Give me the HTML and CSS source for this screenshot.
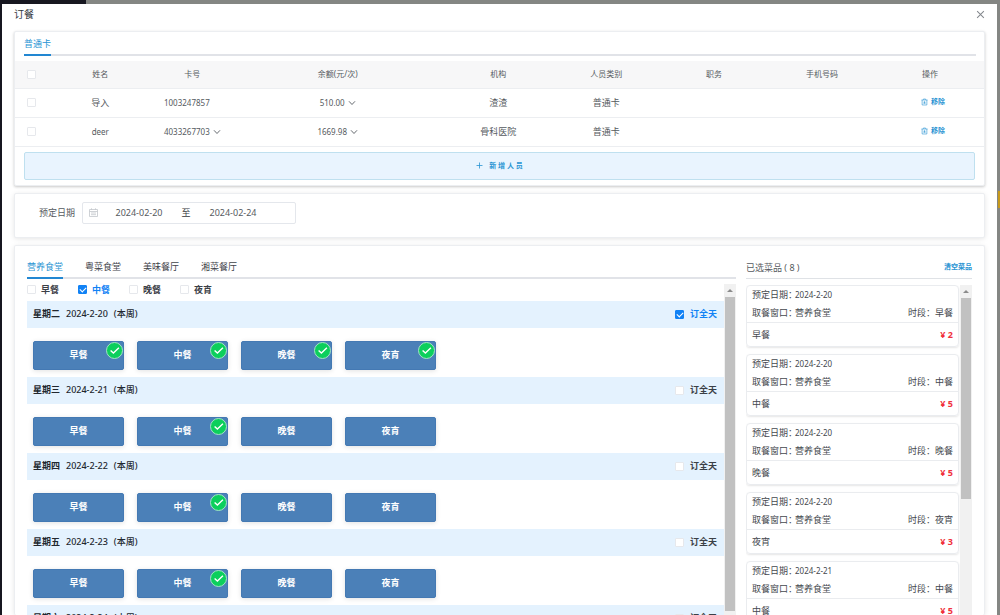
FILE: index.html
```html
<!DOCTYPE html>
<html lang="zh-CN">
<head>
<meta charset="utf-8">
<title>订餐</title>
<link rel="stylesheet" href="styles.css">
</head>
<body>
<svg class="defs" aria-hidden="true">
  <symbol id="chevron" viewBox="0 0 8 8"><path d="M1 2.3 4 5.5 7 2.3" fill="none" stroke="currentColor" stroke-width="0.9"/></symbol>
  <symbol id="trash" viewBox="0 0 8 8"><path d="M0.5 1.7h7M2.7 1.5V0.6h2.6v0.9M1.3 1.7v5.7h5.4V1.7M2.8 4.2l2.4 0M2.8 5.5h2.4M4 3.2v2.3" fill="none" stroke="currentColor" stroke-width="0.7"/></symbol>
  <symbol id="check" viewBox="0 0 17 17"><circle cx="8.5" cy="8.5" r="8" fill="#0ccf5c" stroke="#a3e3c6"/><path d="M4.6 8.4 7.4 11.1 12.9 5.8" fill="none" stroke="#fff" stroke-width="1.4"/></symbol>
</svg>
<main class="dialog">
  <header class="dialog-head">
    <h1>订餐</h1>
    <button class="close" aria-label="关闭"><svg viewBox="0 0 8 8"><path d="M1 1 7 7M7 1 1 7" fill="none" stroke="currentColor" stroke-width="0.9"/></svg></button>
  </header>

  <section class="card people">
    <nav class="tabs"><button class="tab active">普通卡</button></nav>
    <table class="grid">
      <colgroup><col class="c-check"><col class="c-name"><col class="c-card"><col class="c-balance"><col><col><col><col><col></colgroup>
      <thead>
        <tr><th><input type="checkbox" aria-label="全选"></th><th>姓名</th><th>卡号</th><th>余额(元/次)</th><th>机构</th><th>人员类别</th><th>职务</th><th>手机号码</th><th>操作</th></tr>
      </thead>
      <tbody>
        <tr>
          <td><input type="checkbox" aria-label="选择导入"></td><td>导入</td>
          <td><span class="pick"><span>1003247857</span><span class="chev"></span></span></td>
          <td><button class="pick">510.00<svg class="chev"><use href="#chevron"/></svg></button></td>
          <td>渣渣</td><td>普通卡</td><td></td><td></td>
          <td><button class="remove"><svg><use href="#trash"/></svg>移除</button></td>
        </tr>
        <tr>
          <td><input type="checkbox" aria-label="选择deer"></td><td class="latin">deer</td>
          <td><button class="pick">4033267703<svg class="chev"><use href="#chevron"/></svg></button></td>
          <td><button class="pick">1669.98<svg class="chev"><use href="#chevron"/></svg></button></td>
          <td>骨科医院</td><td>普通卡</td><td></td><td></td>
          <td><button class="remove"><svg><use href="#trash"/></svg>移除</button></td>
        </tr>
      </tbody>
    </table>
    <button class="add"><svg viewBox="0 0 7 7"><path d="M3.5 0.5v6M0.5 3.5h6" fill="none" stroke="currentColor" stroke-width="0.8"/></svg>新 增 人 员</button>
  </section>

  <section class="card period">
    <label for="start">预定日期</label>
    <div class="range">
      <svg class="calendar" viewBox="0 0 9 9"><path d="M0.5 1.5h8v7h-8zM0.5 3.5h8M2.5 0.3v1.6M6.5 0.3v1.6M2 5h5M2 6.7h5" fill="none" stroke="currentColor" stroke-width="0.8"/></svg>
      <input id="start" type="text" value="2024-02-20">
      <span>至</span>
      <input type="text" value="2024-02-24" aria-label="结束日期">
    </div>
  </section>

  <section class="card order">
    <div class="menu">
      <nav class="tabs"><button class="tab active">营养食堂</button><button class="tab">粤菜食堂</button><button class="tab">美味餐厅</button><button class="tab">湘菜餐厅</button></nav>
      <div class="scroller">
        <div class="content">
          <div class="filters">
            <label><input type="checkbox">早餐</label>
            <label><input type="checkbox" checked>中餐</label>
            <label><input type="checkbox">晚餐</label>
            <label><input type="checkbox">夜宵</label>
          </div>
          <section class="day">
            <div class="day-head"><h2>星期二</h2><span>2024-2-20</span><span>(本周)</span><label><input type="checkbox" checked>订全天</label></div>
            <div class="meals">
              <button class="meal">早餐<svg><use href="#check"/></svg></button>
              <button class="meal">中餐<svg><use href="#check"/></svg></button>
              <button class="meal">晚餐<svg><use href="#check"/></svg></button>
              <button class="meal">夜宵<svg><use href="#check"/></svg></button>
            </div>
          </section>
          <section class="day">
            <div class="day-head"><h2>星期三</h2><span>2024-2-21</span><span>(本周)</span><label><input type="checkbox">订全天</label></div>
            <div class="meals">
              <button class="meal">早餐</button>
              <button class="meal">中餐<svg><use href="#check"/></svg></button>
              <button class="meal">晚餐</button>
              <button class="meal">夜宵</button>
            </div>
          </section>
          <section class="day">
            <div class="day-head"><h2>星期四</h2><span>2024-2-22</span><span>(本周)</span><label><input type="checkbox">订全天</label></div>
            <div class="meals">
              <button class="meal">早餐</button>
              <button class="meal">中餐<svg><use href="#check"/></svg></button>
              <button class="meal">晚餐</button>
              <button class="meal">夜宵</button>
            </div>
          </section>
          <section class="day">
            <div class="day-head"><h2>星期五</h2><span>2024-2-23</span><span>(本周)</span><label><input type="checkbox">订全天</label></div>
            <div class="meals">
              <button class="meal">早餐</button>
              <button class="meal">中餐<svg><use href="#check"/></svg></button>
              <button class="meal">晚餐</button>
              <button class="meal">夜宵</button>
            </div>
          </section>
          <section class="day">
            <div class="day-head"><h2>星期六</h2><span>2024-2-24</span><span>(本周)</span><label><input type="checkbox">订全天</label></div>
          </section>
        </div>
        <div class="bar"><i class="up"></i><i class="thumb thumb-menu"></i></div>
      </div>
    </div>

    <aside class="chosen">
      <div class="chosen-head"><h2>已选菜品 ( 8 )</h2><button>清空菜品</button></div>
      <div class="scroller">
        <div class="content">
          <article class="pickup">
            <div class="line"><span class="key">预定日期：</span><span class="latin">2024-2-20</span></div>
            <div class="line"><span class="key">取餐窗口：</span><span>营养食堂</span><span class="slot"><span class="key">时段：</span>早餐</span></div>
            <div class="dish"><span>早餐</span><b>¥ 2</b></div>
          </article>
          <article class="pickup">
            <div class="line"><span class="key">预定日期：</span><span class="latin">2024-2-20</span></div>
            <div class="line"><span class="key">取餐窗口：</span><span>营养食堂</span><span class="slot"><span class="key">时段：</span>中餐</span></div>
            <div class="dish"><span>中餐</span><b>¥ 5</b></div>
          </article>
          <article class="pickup">
            <div class="line"><span class="key">预定日期：</span><span class="latin">2024-2-20</span></div>
            <div class="line"><span class="key">取餐窗口：</span><span>营养食堂</span><span class="slot"><span class="key">时段：</span>晚餐</span></div>
            <div class="dish"><span>晚餐</span><b>¥ 5</b></div>
          </article>
          <article class="pickup">
            <div class="line"><span class="key">预定日期：</span><span class="latin">2024-2-20</span></div>
            <div class="line"><span class="key">取餐窗口：</span><span>营养食堂</span><span class="slot"><span class="key">时段：</span>夜宵</span></div>
            <div class="dish"><span>夜宵</span><b>¥ 3</b></div>
          </article>
          <article class="pickup">
            <div class="line"><span class="key">预定日期：</span><span class="latin">2024-2-21</span></div>
            <div class="line"><span class="key">取餐窗口：</span><span>营养食堂</span><span class="slot"><span class="key">时段：</span>中餐</span></div>
            <div class="dish"><span>中餐</span><b>¥ 5</b></div>
          </article>
        </div>
        <div class="bar"><i class="up"></i><i class="thumb thumb-chosen"></i></div>
      </div>
    </aside>
  </section>
</main>
</body>
</html>
```

FILE: styles.css
```css
* { box-sizing: border-box; }

body {
  margin: 0;
  height: 100vh;
  overflow: hidden;
  display: flex;
  padding: 4px 3px 0 2px;
  background: linear-gradient(#c79a1c, #c79a1c) 100% 191px / 2px 17px no-repeat,
              linear-gradient(90deg, #171720 86px, #848683 86px);
  color: #555a60;
  font: 9px/12px "Noto Sans", "Noto Sans CJK SC", sans-serif;
}

.defs { position: absolute; width: 0; height: 0; }

button, input { font: inherit; color: inherit; }

button {
  border: 0;
  padding: 0;
  background: none;
  white-space: nowrap;
  cursor: pointer;
}

h1, h2 { margin: 0; font-size: inherit; font-weight: 400; }

input[type="checkbox"] {
  appearance: none;
  display: block;
  flex: none;
  width: 9px;
  height: 9px;
  margin: 0;
  border: 1px solid #e6e8ec;
  border-radius: 1px;
  background: #fff;
}

input[type="checkbox"]:checked { background: #1182f5; border-color: #1182f5; }

input[type="checkbox"]:checked::after {
  content: "";
  display: block;
  width: 5px;
  height: 3px;
  margin: 1px;
  border: solid #fff;
  border-width: 0 0 1px 1px;
  transform: rotate(-45deg);
}

.dialog {
  flex: 1;
  min-width: 0;
  display: flex;
  flex-direction: column;
  gap: 7px;
  padding: 0 12px;
  background: #fff;
}

.dialog-head {
  display: flex;
  align-items: center;
  justify-content: space-between;
  height: 20px;
}

.dialog-head h1 { font-size: 10px; color: #33373c; }
.close { color: #83878c; }
.close svg { display: block; width: 9px; height: 9px; }

.card {
  flex: none;
  background: #fff;
  border: 1px solid #eceef1;
  border-radius: 2px;
  box-shadow: 0 1px 5px rgba(0, 0, 0, 0.1);
}

.tabs {
  display: flex;
  gap: 22px;
  border-bottom: 2px solid #e1e3e8;
}

.tab {
  margin-bottom: -2px;
  border-bottom: 2px solid transparent;
  color: #3f444a;
}

.tab.active { color: #2a94d3; border-color: #2287d2; }

/* people */
.people { box-shadow: 0 1px 3px rgba(0, 0, 0, 0.22); padding-bottom: 5px; }
.people .tabs { margin: 0 8px 5px 9px; }
.people .tab { height: 24px; padding-top: 2px; }

.grid {
  width: 100%;
  table-layout: fixed;
  border-collapse: collapse;
  text-align: center;
}

.c-check { width: 32px; }
.c-name { width: 11%; }
.c-card { width: 8%; }
.c-balance { width: 22%; }
.grid th { height: 27px; background: #f7f7f8; font-size: 8px; font-weight: 400; }
.grid th, .grid td { padding: 0; border-bottom: 1px solid #eceef1; }
.grid td { height: 29px; }
.grid input[type="checkbox"] { margin: 0 auto; }
.grid .pick, .latin { font-size: 8px; }

.pick { display: inline-flex; align-items: center; gap: 3px; }
.chev { width: 8px; height: 8px; }
.remove { display: inline-flex; align-items: center; gap: 3px; padding-left: 6px; color: #2a94d3; font-size: 7px; font-weight: 700; }
.remove svg { width: 7px; height: 8px; }

.add {
  display: flex;
  align-items: center;
  justify-content: center;
  gap: 6px;
  width: calc(100% - 18px);
  height: 28px;
  margin: 5px 9px 0;
  border: 1px solid #bfe0ef;
  border-radius: 2px;
  background: #e9f4fe;
  color: #2a94d3;
  font-size: 7px;
  font-weight: 700;
}

.add svg { width: 7px; height: 7px; }

/* period */
.period {
  display: flex;
  align-items: flex-start;
  gap: 7px;
  height: 45px;
  padding: 8px 24px;
}

.period label { line-height: 22px; }

.range {
  display: flex;
  align-items: center;
  width: 214px;
  height: 22px;
  padding: 0 6px;
  border: 1px solid #e4e7ec;
  border-radius: 2px;
}

.range input { width: 80px; padding: 0; border: 0; background: none; text-align: center; outline: 0; }
.range span { width: 14px; text-align: center; color: #33373c; }
.calendar { width: 9px; height: 9px; flex: none; color: #c3c6cb; margin-right: 1px; }

/* order */
.order {
  flex: 1;
  min-height: 0;
  display: flex;
  gap: 10px;
  padding: 13px 12px 0;
  border-bottom: 0;
}

.menu { flex: 1; min-width: 0; display: flex; flex-direction: column; }
.menu .tabs { flex: none; margin-bottom: 5px; }
.menu .tab { height: 20px; padding-bottom: 1px; }

.scroller { flex: 1; min-height: 0; display: flex; }
.scroller .content { flex: 1; min-width: 0; overflow: hidden; }

.bar { width: 12px; padding: 0 1px; background: #f1f1f1; overflow: hidden; }
.up { display: flex; justify-content: center; padding-top: 5px; height: 13px; }

.up::after {
  content: "";
  width: 0;
  height: 0;
  border: solid transparent;
  border-width: 0 3px 3px;
  border-bottom-color: #8b8b8b;
}

.thumb { display: block; background: #c1c1c1; }
.thumb-menu { height: calc(100% - 17px); }
.thumb-chosen { height: 61%; }

.filters { display: flex; gap: 19px; height: 17px; }

.filters label, .day-head label {
  display: flex;
  align-items: center;
  gap: 5px;
  color: #3b4047;
  font-weight: 700;
}

.filters label { height: 12px; }
.filters label:has(:checked), .day-head label:has(:checked) { color: #1182f5; }

.day-head {
  display: flex;
  align-items: center;
  gap: 6px;
  height: 27px;
  padding: 0 7px 0 6px;
  background: #e4f2fe;
  color: #22272e;
  font-weight: 500;
}

.day-head h2 { font-weight: 700; }
.day-head label { margin-left: auto; gap: 6px; }

.meals { display: flex; gap: 13px; padding: 13px 6px 7px; }

.meal {
  position: relative;
  width: 91px;
  height: 29px;
  border: 1px solid #4479b3;
  border-radius: 2px;
  background: #4b80b8;
  box-shadow: 0 1px 5px rgba(0, 0, 0, 0.12);
  color: #fff;
  font-weight: 700;
}

.meal svg { position: absolute; top: 0; right: 0; width: 17px; height: 17px; }

/* chosen dishes */
.chosen { width: 226px; flex: none; display: flex; flex-direction: column; }

.chosen-head {
  flex: none;
  display: flex;
  justify-content: space-between;
  height: 20px;
  padding-top: 2px;
  margin-bottom: 6px;
  border-bottom: 1px solid #dfe2e6;
}

.chosen-head h2 { padding-top: 1px; }
.chosen-head button { align-self: flex-start; color: #2a94d3; font-size: 7px; font-weight: 700; }

.chosen .content { padding-right: 1px; }

.pickup {
  height: 62px;
  margin-bottom: 7px;
  border: 1px solid #eaecef;
  border-radius: 4px;
  box-shadow: 0 1px 2px rgba(0, 0, 0, 0.1);
  color: #44484e;
}

.line { display: flex; align-items: center; height: 18px; padding: 0 5px; }
.key { white-space: nowrap; }
.line > .key { width: 43px; }
.slot { margin-left: auto; }

.dish {
  display: flex;
  align-items: center;
  justify-content: space-between;
  height: 26px;
  padding: 0 5px;
  border-top: 1px solid #eaecef;
}

.dish b { color: #f0303c; }
```
